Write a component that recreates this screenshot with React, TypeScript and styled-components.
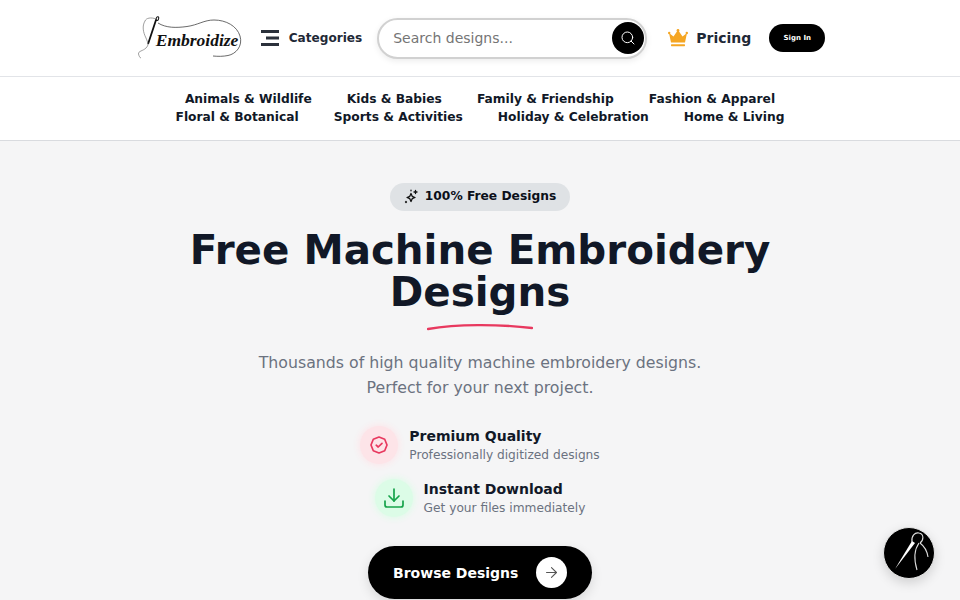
import React from 'react'
import styled, { createGlobalStyle } from 'styled-components'
import { ArrowRight, Download, Search } from 'lucide-react'

const GlobalStyle = createGlobalStyle`
  html, body {
    margin: 0;
    height: 100%;
    overflow: hidden;
    background: #f5f5f6;
    font-family: "DejaVu Sans", sans-serif;
  }
`

const Page = styled.div`
  height: 600px;
  overflow: hidden;
  background: #f5f5f6;
`

const Header = styled.header`
  height: 77px;
  box-sizing: border-box;
  display: flex;
  align-items: center;
  justify-content: center;
  padding-left: 3px;
  background: #fff;
  border-bottom: 1px solid #e2e4e8;
`

const LogoWrap = styled.a`
  position: relative;
  display: block;
  width: 104px;
  height: 44px;
  margin-right: 19px;
`

const LogoText = styled.span`
  position: absolute;
  left: 18px;
  top: 12px;
  font-family: "Liberation Serif", serif;
  font-style: italic;
  font-weight: 700;
  font-size: 17.5px;
  line-height: 24px;
  color: #111;
  white-space: nowrap;
`

const LogoArt = styled.svg`
  position: absolute;
  inset: 0;
`

const CategoriesButton = styled.button`
  display: flex;
  align-items: center;
  gap: 10px;
  padding: 0;
  border: 0;
  background: none;
  margin-right: 15px;
  font: 700 12.1px "DejaVu Sans", sans-serif;
  color: #1f2937;
`

const SearchBox = styled.div`
  width: 270px;
  height: 41px;
  box-sizing: border-box;
  display: flex;
  align-items: center;
  justify-content: space-between;
  padding: 0 1px 0 14px;
  margin-right: 21px;
  background: #fff;
  border: 2px solid #d1d1d1;
  border-radius: 21px;
  box-shadow: 0 2px 6px rgba(0, 0, 0, 0.08);
`

const SearchPlaceholder = styled.span`
  font-size: 14px;
  color: #757575;
`

const SearchButton = styled.span`
  width: 32px;
  height: 32px;
  border-radius: 50%;
  background: #000;
  color: #fff;
  display: flex;
  align-items: center;
  justify-content: center;
`

const PricingLink = styled.a`
  display: flex;
  align-items: center;
  gap: 8px;
  margin-right: 18px;
  font-size: 14px;
  font-weight: 700;
  color: #1f2937;
`

const SignIn = styled.button`
  width: 56px;
  height: 28px;
  padding: 0;
  border: 0;
  border-radius: 14px;
  background: #000;
  color: #fff;
  font: 700 7px "DejaVu Sans", sans-serif;
`

const CategoryNav = styled.nav`
  height: 64px;
  box-sizing: border-box;
  display: flex;
  flex-wrap: wrap;
  align-content: center;
  justify-content: center;
  column-gap: 35px;
  padding: 0 170px 2px;
  background: #fff;
  border-bottom: 1px solid #d9dbdf;
`

const CategoryLink = styled.a`
  font-size: 12.25px;
  font-weight: 700;
  line-height: 18px;
  color: #111827;
  white-space: nowrap;
`

const Hero = styled.main`
  display: flex;
  flex-direction: column;
  align-items: center;
  padding-top: 42px;
`

const Pill = styled.div`
  height: 28px;
  box-sizing: border-box;
  display: flex;
  align-items: center;
  gap: 6px;
  padding: 0 14px 2px;
  border-radius: 14px;
  background: #dfe2e5;
  font-size: 12.25px;
  font-weight: 700;
  color: #0b0f19;
`

const Title = styled.h1`
  margin: 18px 0 0;
  width: 640px;
  font-size: 40.4px;
  font-weight: 700;
  line-height: 42px;
  text-align: center;
  color: #111827;
`

const Underlined = styled.span`
  position: relative;
  display: inline-block;
`

const Squiggle = styled.svg`
  position: absolute;
  left: 37px;
  top: 52px;
`

const Subtitle = styled.p`
  margin: 37px 0 0;
  font-size: 15.75px;
  line-height: 25px;
  text-align: center;
  color: #6b7280;
`

const Features = styled.div`
  margin-top: 26px;
  display: flex;
  flex-direction: column;
  align-items: center;
  gap: 15px;
`

const Feature = styled.div`
  display: flex;
  align-items: center;
  gap: 11px;
`

const FeatureIcon = styled.span<{ $tone: string; $glow: string }>`
  width: 38px;
  height: 38px;
  border-radius: 50%;
  display: flex;
  align-items: center;
  justify-content: center;
  color: ${(p) => p.$tone};
  background: ${(p) => p.$glow};
  box-shadow: 0 0 7px 1px ${(p) => p.$glow};
`

const FeatureTitle = styled.div`
  font-size: 14px;
  font-weight: 700;
  line-height: 20px;
  color: #111827;
`

const FeatureText = styled.div`
  font-size: 12.2px;
  line-height: 18px;
  color: #6b7280;
`

const BrowseButton = styled.button`
  margin-top: 29px;
  width: 224px;
  height: 53px;
  flex-shrink: 0;
  display: flex;
  align-items: center;
  justify-content: space-between;
  padding: 0 25px;
  box-sizing: border-box;
  border: 0;
  border-radius: 27px;
  background: #000;
  color: #fff;
  font: 700 14px "DejaVu Sans", sans-serif;
  box-shadow: 0 4px 12px rgba(0, 0, 0, 0.12);
`

const ArrowCircle = styled.span`
  width: 31px;
  height: 31px;
  border-radius: 50%;
  background: #fff;
  color: #555;
  display: flex;
  align-items: center;
  justify-content: center;
`

const FloatingButton = styled.button`
  position: fixed;
  right: 25px;
  bottom: 21px;
  width: 52px;
  height: 52px;
  padding: 0;
  border: 1px solid #e5e5e5;
  border-radius: 50%;
  background: #000;
  display: flex;
  align-items: center;
  justify-content: center;
  box-shadow: 0 4px 12px rgba(0, 0, 0, 0.15);
`

const categories = [
  'Animals & Wildlife',
  'Kids & Babies',
  'Family & Friendship',
  'Fashion & Apparel',
  'Floral & Botanical',
  'Sports & Activities',
  'Holiday & Celebration',
  'Home & Living',
]

const App = () => {
  return (
    <Page>
      <GlobalStyle />
      <Header>
        <LogoWrap>
          <LogoArt width="104" height="44" viewBox="0 0 104 44" fill="none">
            <path d="M10.3 27.3 L18 4" stroke="#111" strokeWidth="1.8" strokeLinecap="round" />
            <ellipse cx="19.4" cy="2.6" rx="1.2" ry="2" stroke="#111" strokeWidth="1" transform="rotate(18 19.4 2.6)" />
            <path d="M18 3 C 13 1 8 2 7 5 C 4 10 5 16 8 22 C 10 27 11 29 8 32 C 5 35 0 35 0.5 38 C 1 40 2 42 3 42" stroke="#777" strokeWidth="0.7" />
            <path d="M20 7 C 28 12 38 12 49 10.5 C 60 9 66 4 76 4 C 88 4 99 10 102 20 C 105 30 98 38 90 39.5 C 85 40.5 80 40.5 75 40" stroke="#444" strokeWidth="0.8" />
          </LogoArt>
          <LogoText>Embroidize</LogoText>
        </LogoWrap>

        <CategoriesButton>
          <svg width="18" height="16" viewBox="0 0 18 16" fill="#2b313b">
            <rect x="0" y="0" width="18" height="3" />
            <rect x="5" y="6.5" width="13" height="3" />
            <rect x="0" y="13" width="18" height="3" />
          </svg>
          Categories
        </CategoriesButton>

        <SearchBox>
          <SearchPlaceholder>Search designs...</SearchPlaceholder>
          <SearchButton>
            <Search size={16} strokeWidth={1.5} />
          </SearchButton>
        </SearchBox>

        <PricingLink>
          <svg width="20" height="18" viewBox="0 0 20 18" fill="#f5a623">
            <circle cx="10" cy="1.4" r="1.4" />
            <circle cx="1.2" cy="4" r="1.2" />
            <circle cx="18.8" cy="4" r="1.2" />
            <path d="M1 4 L5.5 7.5 L10 1 L14.5 7.5 L19 4 L17 13.5 H3 Z" />
            <rect x="3" y="15.2" width="14" height="2" rx="0.6" />
          </svg>
          Pricing
        </PricingLink>

        <SignIn>Sign In</SignIn>
      </Header>

      <CategoryNav>
        {categories.map((c) => (
          <CategoryLink key={c}>{c}</CategoryLink>
        ))}
      </CategoryNav>

      <Hero>
        <Pill>
          <svg width="15" height="15" viewBox="0 0 15 15" fill="none" stroke="#111" strokeWidth="1.3" strokeLinecap="round" strokeLinejoin="round">
            <path d="M7 4.5 L8.2 7.3 L11 8.5 L8.2 9.7 L7 12.5 L5.8 9.7 L3 8.5 L5.8 7.3 Z" />
            <path d="M11.5 1.5 V4.5 M10 3 H13" />
            <path d="M2 12.5 V13.5 M1.5 13 H2.5" />
            <path d="M7 1.2 V1.8" />
          </svg>
          100% Free Designs
        </Pill>

        <Title>
          Free Machine Embroidery{' '}
          <Underlined>
            Designs
            <Squiggle width="106" height="8" viewBox="0 0 106 8" fill="none">
              <path d="M1 6 C 30 1 70 1 105 5" stroke="#e8395f" strokeWidth="2.4" strokeLinecap="round" />
            </Squiggle>
          </Underlined>
        </Title>

        <Subtitle>
          Thousands of high quality machine embroidery designs.
          <br />
          Perfect for your next project.
        </Subtitle>

        <Features>
          <Feature>
            <FeatureIcon $tone="#e8395f" $glow="#fde4e8">
              <svg width="18" height="18" viewBox="0 0 18 18" fill="none" stroke="currentColor" strokeWidth="1.7" strokeLinecap="round" strokeLinejoin="round">
                <path d="M9 1 L14.7 3.3 L17 9 L14.7 14.7 L9 17 L3.3 14.7 L1 9 L3.3 3.3 Z" />
                <path d="M6.2 9.2 L8.2 11 L12 7.3" />
              </svg>
            </FeatureIcon>
            <div>
              <FeatureTitle>Premium Quality</FeatureTitle>
              <FeatureText>Professionally digitized designs</FeatureText>
            </div>
          </Feature>
          <Feature>
            <FeatureIcon $tone="#16a34a" $glow="#dcfce7">
              <Download size={24} strokeWidth={1.7} />
            </FeatureIcon>
            <div>
              <FeatureTitle>Instant Download</FeatureTitle>
              <FeatureText>Get your files immediately</FeatureText>
            </div>
          </Feature>
        </Features>

        <BrowseButton>
          Browse Designs
          <ArrowCircle>
            <ArrowRight size={17} strokeWidth={1.5} />
          </ArrowCircle>
        </BrowseButton>
      </Hero>

      <FloatingButton>
        <svg width="50" height="50" viewBox="0 0 50 50" fill="none">
          <path d="M11 41 L28 13 L31 15 Z" fill="#fff" />
          <path d="M28 14 C 27 8 31 4 35 5 C 40 6 40 12 36 15" stroke="#ddd" strokeWidth="1.1" />
          <path d="M36 15 C 40 18 43 22 44 29" stroke="#ddd" strokeWidth="1.1" />
          <path d="M35 15 C 30 22 30 32 33 42" stroke="#ddd" strokeWidth="1.1" />
        </svg>
      </FloatingButton>
    </Page>
  )
}

export default App
